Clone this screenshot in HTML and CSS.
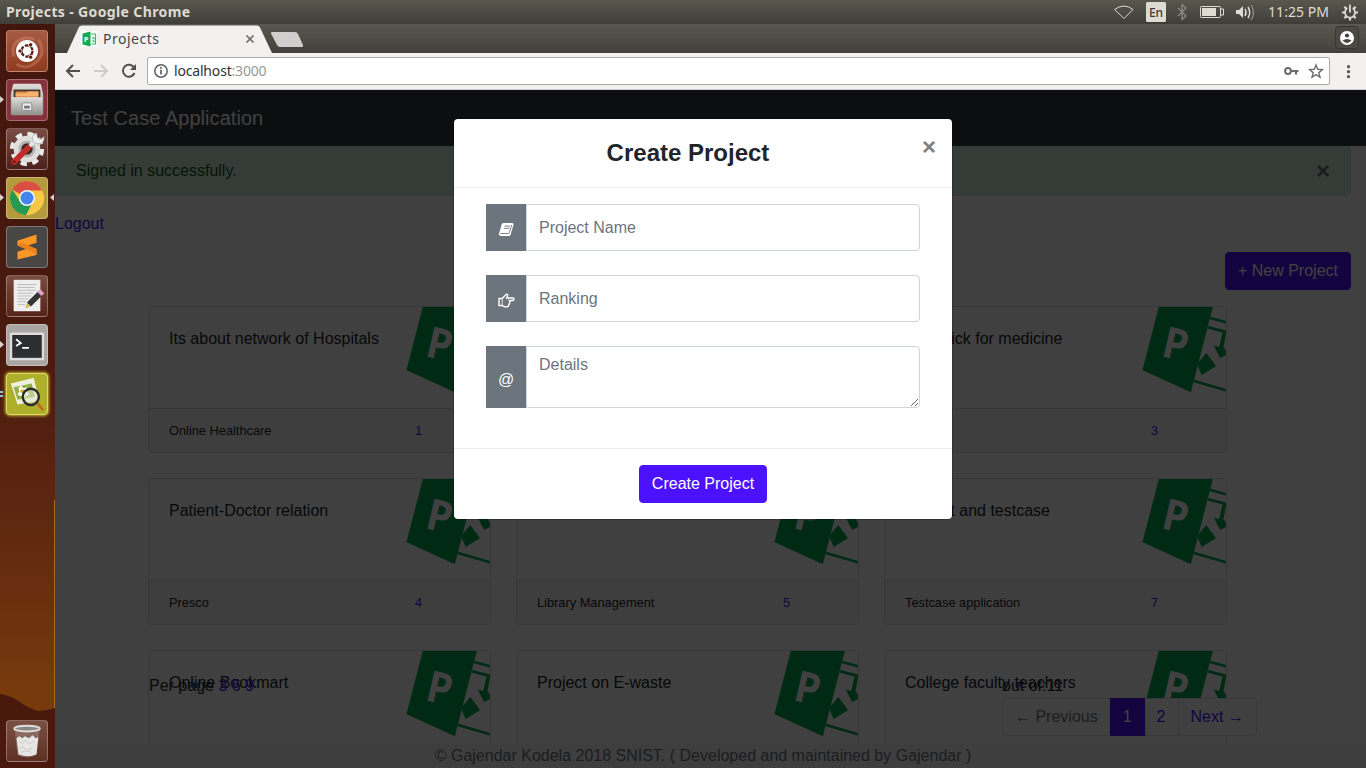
FILE: index.html
```html
<!DOCTYPE html>
<html lang="en">
<head>
<meta charset="utf-8">
<title>Projects</title>
<link rel="stylesheet" href="styles.css">
</head>
<body>
<svg class="defs" width="0" height="0">
  <defs>
    <linearGradient id="metal" x1="0" y1="0" x2="0" y2="1"><stop offset="0" stop-color="#dededa"/><stop offset="1" stop-color="#93938f"/></linearGradient>
    <symbol id="logo" viewBox="738 33 330 303">
      <path d="M828 33L768 272L1000 336H1068V33Z" fill="#fff"/>
      <path d="M867 33H1028L962 288L818 222Z" fill="#00a651" stroke="#00a651"/>
      <path d="M1021 66L1068 79M1014 94L1068 108M970 254L1068 283" fill="none" stroke="#00a651" stroke-width="8"/>
      <path d="M1009 171L1038 210L995 237L981 204Z" fill="#00a651"/>
      <path d="M1058 106L1048 152L1032 150L1050 186L1068 177V162H1064L1068 140V108Z" fill="#00a651"/>
      <path d="M1068 112L1060 156L1068 158Z" fill="#fff"/>
      <text x="0" y="0" transform="translate(871 180) rotate(13) scale(.92 1)" font-family="Noto Sans" font-weight="700" font-size="130" fill="#fff">P</text>
    </symbol>
  </defs>
</svg>
<div class="screen">
  <header class="panel">
    <span class="panel-title">Projects - Google Chrome</span>
    <svg class="indicators" width="266" height="24" viewBox="0 0 266 24">
      <path d="M14.500 9.500Q24 2.500 33 9.500L24 18.500Z" fill="none" stroke="#dfdbd2" stroke-width="1"/>
      <rect x="46" y="2" width="20" height="20" rx="1.500" fill="#dfdbd2"/>
      <text x="56" y="17" text-anchor="middle" font-family="Noto Sans" font-size="12" font-weight="500" fill="#3c3b37">En</text>
      <path d="M78 8l8 8-4 3.500V4.500L86 8l-8 8" fill="none" stroke="#8b8981" stroke-width="1.300"/>
      <rect x="100.500" y="6.500" width="20" height="11" rx="1" fill="none" stroke="#dfdbd2"/><rect x="102" y="8" width="14" height="8" fill="#dfdbd2"/><path d="M121 9h2.500v6H121" fill="none" stroke="#dfdbd2"/>
      <path d="M136 10h3l4-4v12l-4-4h-3z" fill="#dfdbd2"/><path d="M145 9q2 3.500 0 7M148 7q3.500 5.500 0 11" fill="none" stroke="#dfdbd2" stroke-width="1.500"/><path d="M151 5q5 7.500 0 15" fill="none" stroke="#8b8981" stroke-width="1.300"/>
      <text x="168" y="17" font-family="Noto Sans" font-size="14" textLength="61" fill="#dfdbd2">11:25 PM</text>
      <g stroke="#dfdbd2" fill="none"><circle cx="250" cy="12.500" r="5" stroke-width="1.700"/><path d="M250 17.500v3M245 12.500h-3M255 12.500h3M246.500 16l-2.200 2.200M253.500 16l2.200 2.200M246.500 9l-2.200-2.200M253.500 9l2.200-2.200" stroke-width="2.200"/></g>
      <path d="M250 4v5" stroke="#504f48" stroke-width="5"/><path d="M250 4.500v8" stroke="#dfdbd2" stroke-width="1.800"/>
    </svg>
  </header>
  <div class="desktop">
    <aside class="launcher">
      <svg class="pips" width="55" height="744" viewBox="0 24 55 744"><path d="M0 694Q12 696 20 702T38 711Q46 711 55 708V768H0z" fill="#48190c"/><path d="M0 96l4 3.500L0 103zM0 194l4 3.500L0 201zM0 341l4 3.500L0 348zM54 194l-4 3.500 4 3.500z" fill="#d8d0cb"/><path d="M0 392h3M0 396h3" stroke="#8ec4de" stroke-width="2"/><path d="M54.500 500V708" stroke="#b0661c"/></svg>
      <div class="tiles">
        <div class="tile ubuntu"><svg viewBox="0 0 42 42"><path d="M7 27Q3 10 20 7M33 9Q42 25 29 34M10 35Q22 42 32 31M11 13Q18 4 29 9" stroke="#df9a7d" stroke-opacity=".35" stroke-width="3" fill="none"/><circle cx="21" cy="21" r="11.500" fill="#fff"/><circle cx="21" cy="21" r="5.800" fill="none" stroke="#5a1d10" stroke-width="2.400" stroke-dasharray="10.600 1.550"/><g fill="#5a1d10" stroke="#fff" stroke-width=".8"><circle cx="13.700" cy="21" r="2.200"/><circle cx="24.800" cy="14.500" r="2.200"/><circle cx="24.800" cy="27.500" r="2.200"/></g></svg></div>
        <div class="tile files"><svg viewBox="0 0 42 42"><path d="M6 6q0-2 2-2h26q2 0 2 2l2 9v20q0 2-2 2H6q-2 0-2-2V15z" fill="url(#metal)"/><path d="M7 10h28v9H7z" fill="#443730"/><path d="M9 12h24v7H9z" fill="#e08940"/><path d="M9 14h11l2-2h11v5H9z" fill="#f3b36c"/><path d="M5 18h32v18H5z" fill="url(#metal)"/><rect x="16" y="24" width="10" height="8" rx="1" fill="#eee" stroke="#888"/><path d="M18 27h6v3h-6z" fill="#777"/></svg></div>
        <div class="tile settings"><svg viewBox="0 0 42 42"><circle cx="21" cy="21" r="15.500" fill="none" stroke="#e9e9e7" stroke-width="5" stroke-dasharray="6.500 5.670"/><circle cx="21" cy="21" r="11" fill="none" stroke="#dededc" stroke-width="6"/><circle cx="21" cy="21" r="9" fill="#b5b5b3"/><circle cx="21" cy="21" r="6" fill="#3d2925"/><path d="M20 22L30 12" stroke="#e5e5e3" stroke-width="4"/><path d="M7.500 34.500L22 20" stroke="#c32b2b" stroke-width="6" stroke-linecap="round"/><path d="M31 4q-6 3-4 8t9 3q3-1 3-7l-4 3-3-2z" fill="#eee" stroke="#999" stroke-width=".6"/><circle cx="7.500" cy="34.500" r="1.500" fill="#651010"/></svg></div>
        <div class="tile chrome"><svg viewBox="0 0 42 42"><circle cx="21" cy="21" r="18" fill="#f7c843"/><path d="M21 21L5.500 12A18 18 0 0 1 37 13H21z" fill="#d94f43"/><path d="M5.500 12A18 18 0 0 0 20 39L27 25 14 25z" fill="#259b51"/><circle cx="21" cy="21" r="8.500" fill="#f4f4f4"/><circle cx="21" cy="21" r="6.800" fill="#4384ee"/></svg></div>
        <div class="tile sublime"><svg viewBox="0 0 42 42"><path d="M11 14.500L31 8v8.500l-9 3 9 3.500v6.500L11 34v-8l9-3-9-3.500z" fill="#fb9727"/><path d="M11 19.500l9 3.500 11 6v-6L15 16z" fill="#e98218"/></svg></div>
        <div class="tile editor"><svg viewBox="0 0 42 42"><path d="M7 4h28v33H7z" fill="#eee"/><path d="M11 9h20M11 12h18M11 15h20M11 18h16M11 21h14M11 24h12M11 27h9M11 30h8" stroke="#bbb"/><path d="M23 30L36 17" stroke="#343434" stroke-width="6"/><path d="M34 19L37 16" stroke="#dfa6cb" stroke-width="6"/><path d="M19 34l2-6 4 4z" fill="#d7bb5d"/></svg></div>
        <div class="tile terminal"><svg viewBox="0 0 42 42"><rect x="3" y="8" width="36" height="29" rx="1" fill="#ddd"/><rect x="5.500" y="10.500" width="31" height="24" fill="#2c2e2f"/><path d="M9.500 15l5 4-5 3M16 24h7" fill="none" stroke="#fff" stroke-width="1.800"/></svg></div>
        <div class="tile viewer"><svg viewBox="0 0 42 42"><path d="M4 10l24-6 6 24-23 4z" fill="#edf0dc"/><path d="M7 14l19-4 3 14-18 3z" fill="#94af45"/><path d="M15 12l2 3 4-1-1 4 4 3-4 2-3 3-2-3-4-1 2-4-1-3z" fill="#fff"/><circle cx="16" cy="18" r="2" fill="#e6a520"/><circle cx="25" cy="24" r="8.500" fill="#e0e4c9" fill-opacity=".55" stroke="#292c2b" stroke-width="2.500"/><path d="M32 31l6 7" stroke="#bd6d20" stroke-width="3"/></svg></div>
      </div>
      <div class="tile trash"><svg viewBox="0 0 42 42"><path d="M8 9h26l-3 27q-10 4-20 0z" fill="#a28d84" fill-opacity=".5"/><path d="M10 18l3-2 3 2 3-2 4 2 4-3 3 3 3-1-1 8-1 10q-9 4-19 0l-1-9z" fill="#e6e6e4"/><path d="M13 21l3 3 3-4 5 4 4-3M13 29l4-2 4 4 6-3M15 33l5-2 6 2" fill="none" stroke="#c8c8c6" stroke-width="1"/><ellipse cx="21" cy="8" rx="13.500" ry="3" fill="#8b8783" stroke="#ddd" stroke-width="2"/></svg></div>
    </aside>
    <div class="browser">
      <div class="tabstrip">
        <svg width="1311" height="29" viewBox="55 24 1311 29">
          <path d="M67 53L79 27q.7-1.500 3-1.500H257q2 0 3 2L272 53z" fill="#f2f1f0"/>
          <path d="M271 33.500q-.5-1.500 1-1.500h23q2 0 3 2l5 11q.6 2-1 2H280q-2 0-3-2z" fill="#d0cfce"/>
          <rect x="81" y="31" width="16" height="16" fill="#fff"/>
          <path d="M82.500 33.500l8-2v15l-8-2z" fill="#10ab50"/><path d="M91 34h4.500v10h-4.500m1.500-7l2 2m0 3l-2-2" fill="none" stroke="#39bb70" stroke-width="1.200"/>
          <text x="84" y="42" font-family="Noto Sans" font-size="7" font-weight="700" fill="#fff">P</text>
          <text x="103" y="44" font-family="Noto Sans" font-size="14" textLength="56" fill="#46464a">Projects</text>
          <path d="M246.500 35.500l7 7M253.500 35.500l-7 7" stroke="#6c6c6c" stroke-width="1.700"/>
          <rect x="1335.500" y="26.500" width="23" height="22" rx="3" fill="#4a4a43" stroke="#36352f"/>
          <circle cx="1347" cy="38" r="7" fill="#fff"/><circle cx="1347" cy="35.500" r="2.100" fill="#45443e"/><path d="M1342.500 40.500q4.500-3 9 0-4.500 4.800-9 0" fill="#45443e"/>
        </svg>
      </div>
      <div class="toolbar">
        <svg width="92" height="37" viewBox="55 53 92 37"><path d="M80 71H67M73 65l-6 6 6 6" fill="none" stroke="#505050" stroke-width="2"/><path d="M94 71h13M101 65l6 6-6 6" fill="none" stroke="#ccc" stroke-width="2"/><path d="M134 67.500A6 6 0 1 0 134.500 73" fill="none" stroke="#505050" stroke-width="2"/><path d="M136 64v6h-6z" fill="#505050"/></svg>
        <div class="address">
          <svg width="26" height="26" viewBox="0 0 26 26"><circle cx="13" cy="13" r="6.200" fill="none" stroke="#5f5f5f" stroke-width="1.500"/><path d="M13 11.800v4.600M13 9v1.700" stroke="#5f5f5f" stroke-width="1.700"/></svg>
          <span class="url">localhost<span>:3000</span></span>
          <svg class="tools" width="48" height="26" viewBox="1281 58 48 26"><circle cx="1288" cy="71" r="2.900" fill="none" stroke="#6c6c6c" stroke-width="2"/><path d="M1291 71h7.500M1296 71v3.500" fill="none" stroke="#6c6c6c" stroke-width="2.200"/><path d="M1316 65l1.700 4.300 4.700.3-3.600 3 1.200 4.600-4-2.600-4 2.600 1.200-4.600-3.600-3 4.700-.3z" fill="none" stroke="#707070" stroke-width="1.400"/></svg>
        </div>
        <svg width="36" height="37" viewBox="1330 53 36 37"><g fill="#555"><circle cx="1348.500" cy="66.700" r="1.600"/><circle cx="1348.500" cy="71.700" r="1.600"/><circle cx="1348.500" cy="76.700" r="1.600"/></g></svg>
      </div>
      <div class="page">
        <nav class="navbar">Test Case Application</nav>
        <div class="content">
          <div class="alert"><span>Signed in successfully.</span><b>×</b></div>
          <a class="logout">Logout</a>
          <div class="actions"><button class="btn">+ New Project</button></div>
          <div class="cards">
            <article class="card"><div class="card-body">Its about network of Hospitals<svg><use href="#logo"/></svg></div><div class="card-footer"><span>Online Healthcare</span><a>1</a></div></article>
            <article class="card"><div class="card-body"><svg><use href="#logo"/></svg></div><div class="card-footer"></div></article>
            <article class="card"><div class="card-body">One click for medicine<svg><use href="#logo"/></svg></div><div class="card-footer"><span></span><a>3</a></div></article>
            <article class="card"><div class="card-body">Patient-Doctor relation<svg><use href="#logo"/></svg></div><div class="card-footer"><span>Presco</span><a>4</a></div></article>
            <article class="card"><div class="card-body"><svg><use href="#logo"/></svg></div><div class="card-footer"><span>Library Management</span><a>5</a></div></article>
            <article class="card"><div class="card-body">Project and testcase<svg><use href="#logo"/></svg></div><div class="card-footer"><span>Testcase application</span><a>7</a></div></article>
            <article class="card"><div class="card-body">Online Bookmart<svg><use href="#logo"/></svg></div><div class="card-footer"></div></article>
            <article class="card"><div class="card-body">Project on E-waste<svg><use href="#logo"/></svg></div><div class="card-footer"></div></article>
            <article class="card"><div class="card-body">College faculty teachers<svg><use href="#logo"/></svg></div><div class="card-footer"></div></article>
          </div>
        </div>
        <div class="pager">
          <div class="per-page">Per page <a>3</a> <a>6</a> <a>9</a></div>
          <div class="pages"><div>out of:11</div><div class="pagination"><span class="off">← Previous</span><span class="active">1</span><span>2</span><span>Next →</span></div></div>
        </div>
        <footer class="footer">© Gajendar Kodela 2018 SNIST. ( Developed and maintained by Gajendar )</footer>
        <div class="backdrop">
          <section class="modal">
            <div class="modal-header"><h4>Create Project</h4><b class="close">×</b></div>
            <div class="modal-body">
              <div class="group"><span class="addon"><svg width="16" height="16" viewBox="0 0 16 16"><path d="M5.500 1h8.800q1.600.3 1.200 1.800l-2.900 9.600q-.5 1.600-2 1.600H2.500Q.4 13.500 1 11.500L3.800 2.300Q4.200 1 5.500 1z" fill="#fff"/><path d="M6.500 4.100h5.500M5.900 6.300h5.500M2.300 11.500h8.200q.6 0 .8-.6L13.700 3" fill="none" stroke="#6c757d" stroke-width=".9"/></svg></span><input type="text" placeholder="Project Name"></div>
              <div class="group"><span class="addon"><svg class="hand" width="18" height="16" viewBox="0 0 18 16"><path d="M2 5.500H5.200L9 1.500q1.500-.6 1.700.8 0 1-1 2.700h6q1.300 0 1.300 1.200T15.700 7.500H12.500q1 1.200 0 2.200.2 1.400-.8 2 .1 2-1.800 2H7.800Q6.500 13.500 5.300 12.500H2z" fill="none" stroke="#fff" stroke-width="1.400"/><path d="M5.200 5.500v7" stroke="#fff" stroke-width=".8"/></svg></span><input type="text" placeholder="Ranking"></div>
              <div class="group area"><span class="addon">@</span><textarea rows="2" placeholder="Details"></textarea></div>
            </div>
            <div class="modal-footer"><button class="btn">Create Project</button></div>
          </section>
        </div>
      </div>
    </div>
  </div>
</div>
</body>
</html>
```
FILE: styles.css
```css
* { box-sizing: border-box; }
body { margin: 0; overflow: hidden; font: 16px/24px "Liberation Sans", Arial, sans-serif; color: #212529; }
.defs { position: absolute; }
svg { display: block; flex: none; }
.screen { width: 1366px; height: 768px; display: flex; flex-direction: column; overflow: hidden; }
.panel { height: 24px; flex: none; display: flex; justify-content: space-between; align-items: center; padding-left: 6px; background: linear-gradient(#59584e, #3e3d38); }
.panel-title { font: 700 14px/24px "Noto Sans", sans-serif; letter-spacing: .37px; color: #dfdbd2; }
.desktop { display: flex; height: 744px; }

.launcher { position: relative; width: 55px; flex: none; display: flex; flex-direction: column; justify-content: space-between; padding: 6px 7px 6px 6px; background: linear-gradient(#42160d 0, #4a1a0e 45%, #612810 68%, #763a0d 89%, #763a0d); }
.tiles { display: flex; flex-direction: column; gap: 7px; }
.tile { position: relative; width: 42px; height: 42px; border-radius: 4px; border: 1px solid rgba(255,255,255,.28); background: rgba(255,255,255,.13); }
.tile svg { width: 40px; height: 40px; }
.ubuntu { background: linear-gradient(#a65c42, #8f3b20); }
.files { background: #86323c; }
.settings { background: linear-gradient(#794d44, #4c211b); }
.chrome { background: #b39a3d; }
.sublime { background: #484746; }
.editor { background: linear-gradient(#794d40, #552419); }
.terminal { background: #aaa6a4; }
.viewer { background: #aeb02c; border-color: #e3d76c; box-shadow: 0 0 3px 1px #c6b82c; }
.trash { background: linear-gradient(#7b5042, #5d3023); }
.pips { position: absolute; left: 0; top: 0; }

.browser { width: 1311px; }
.tabstrip { height: 29px; background: linear-gradient(#59584f, #42413b); }
.toolbar { height: 37px; display: flex; align-items: center; background: #f2f1f0; border-bottom: 1px solid #d2d1d0; }
.address { flex: 1; height: 28px; margin-bottom: 1px; display: flex; align-items: center; background: #fff; border: 1px solid #aaa; border-radius: 2px; }
.url { font: 14px/26px "Noto Sans", sans-serif; letter-spacing: -.18px; color: #333; }
.url span { color: #999; }
.tools { margin-left: auto; }

.page { position: relative; height: 678px; overflow: hidden; background: #fff; }
.navbar { height: 56px; padding: 0 16px; font-size: 20px; letter-spacing: .05px; line-height: 56px; color: #fff; background: #343a40; }
.content { width: 1296px; }
.alert { height: 50px; display: flex; justify-content: space-between; padding: 12px 20px; background: #d4edda; border: 1px solid #c3e6cb; border-radius: 4px; color: #155724; }
.alert b { font-size: 24px; color: #6a766d; }
.logout { display: block; margin: 16px 0; }
a { color: #4c11ff; }
.actions { display: flex; justify-content: flex-end; }
.btn { height: 38px; padding: 0 12px; border: 1px solid #4c11ff; border-radius: 4px; background: #4c11ff; color: #fff; font: 16px/24px "Liberation Sans", Arial, sans-serif; }
.cards { display: grid; grid-template-columns: repeat(3, 343px); gap: 25px; margin: 16px 0 0 93px; }
.card { height: 147px; border: 1px solid #dfdfdf; border-radius: 4px; overflow: hidden; }
.card-body { position: relative; height: 101px; padding: 20px; background: #fdfdfd; }
.card-body svg { position: absolute; z-index: 0; right: 0; top: 0; width: 110px; height: 101px; }
.card-footer { height: 45px; padding: 0 68px 0 20px; display: flex; justify-content: space-between; font-size: 12.8px; line-height: 43px; background: #f7f7f7; border-top: 1px solid #dfdfdf; }
.pager { position: absolute; left: 94px; right: 109px; bottom: 32px; display: flex; justify-content: space-between; align-items: flex-start; }
.pages { width: 255px; }
.pagination { display: flex; height: 38px; background: #fff; border: 1px solid #dee2e6; border-radius: 4px; color: #4c11ff; line-height: 36px; white-space: nowrap; }
.pagination span { padding: 0 12px; border-right: 1px solid #dee2e6; }
.pagination span:last-child { border: 0; }
.pagination .off { color: #6c757d; border: 0; }
.pagination .active { margin: -1px 0; line-height: 38px; padding: 0 13px; background: #4c11ff; color: #fff; border: 0; }
.footer { position: absolute; left: 0; right: 0; bottom: 0; height: 24px; padding-right: 15px; text-align: center; background: #f7f7f7; color: #6c757d; }

.backdrop { position: absolute; inset: 0; padding: 29px 0 0 399px; background: rgba(0,0,0,.75); }
.modal { width: 498px; height: 400px; background: #fff; border-radius: 4px; box-shadow: 0 0 0 1px rgba(0,0,0,.2); }
.modal-header { height: 69px; display: flex; justify-content: space-between; padding: 16px 16px 0; border-bottom: 1px solid #e9ecef; text-align: center; }
.modal-header h4 { flex: 1; margin: 0; padding: 3px 16px 0 0; font-size: 24px; line-height: 29px; }
.close { font-size: 24px; color: #7f7f7f; }
.modal-body { height: 260px; padding: 16px 32px; }
.group { height: 47px; display: flex; margin-bottom: 24px; }
.group.area { height: 62px; margin: 0; }
.addon { width: 40px; display: flex; align-items: center; justify-content: center; padding-top: 4px; color: #fff; background: #6c757d; }
.area .addon { padding-top: 6px; }
.group input, .group textarea { flex: 1; min-width: 0; padding: 6px 12px; border: 1px solid #ced4da; border-radius: 0 4px 4px 0; background: #fff; font: 16px/24px "Liberation Sans", Arial, sans-serif; }
.group ::placeholder { color: #6c757d; opacity: 1; }
.modal-footer { height: 71px; padding-top: 16px; text-align: center; border-top: 1px solid #e9ecef; }
```
